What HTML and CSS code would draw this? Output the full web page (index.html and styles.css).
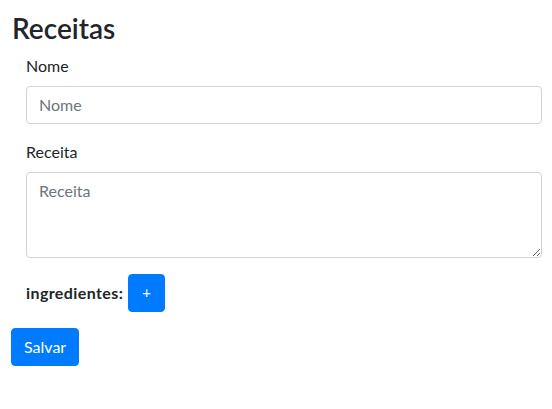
FILE: index.html
```html
<!DOCTYPE html>
<html lang="pt">
<head>
<meta charset="utf-8">
<title>Receitas</title>
<link rel="stylesheet" href="styles.css">
</head>
<body>
<div class="page">
  <h3 class="title">Receitas</h3>
  <form class="form">
    <div class="group">
      <label class="label" for="nome">Nome</label>
      <input class="control" id="nome" type="text" placeholder="Nome">
    </div>
    <div class="group">
      <label class="label" for="receita">Receita</label>
      <textarea class="control area" id="receita" rows="3" placeholder="Receita"></textarea>
    </div>
    <div class="group ingr">
      <b class="ingr-label">ingredientes:</b>
      <button type="button" class="btn btn-add">+</button>
    </div>
    <button type="submit" class="btn">Salvar</button>
  </form>
</div>
</body>
</html>
```
FILE: styles.css
```css
* { box-sizing: border-box; }
html, body { margin: 0; padding: 0; background: #fff; }
body {
  font-family: Lato, "Segoe UI", "Liberation Sans", sans-serif;
  font-size: 16px;
  line-height: 1.5;
  color: #212529;
}
.page { padding: 12px 10px 0 11px; }
.title {
  margin: 0 0 8px 0;
  font-size: 28px;
  font-weight: 600;
  line-height: 1.2;
  padding-left: 1px;
}
.form { display: block; }
.group { margin: 0 0 16px 15px; }
.label { display: inline-block; margin-bottom: 8px; }
.control {
  display: block;
  width: 100%;
  height: 38px;
  padding: 6px 12px;
  font-family: inherit;
  font-size: 16px;
  line-height: 1.5;
  color: #495057;
  background: #fff;
  border: 1px solid #ced4da;
  border-radius: 4px;
  margin: 0;
}
.control::placeholder { color: #6c757d; opacity: 1; }
.area { height: 86px; resize: vertical; }
.ingr { display: flex; align-items: center; gap: 5px; }
.ingr-label { font-weight: 700; letter-spacing: 0.4px; }
.btn {
  display: inline-block;
  font-family: inherit;
  font-size: 16px;
  line-height: 1.5;
  padding: 6px 12px;
  color: #fff;
  background: #007bff;
  border: 1px solid #007bff;
  border-radius: 4px;
  margin: 0;
}
.btn-add { width: 37px; height: 38px; padding: 6px 0; text-align: center; font-size: 15px; }
```
